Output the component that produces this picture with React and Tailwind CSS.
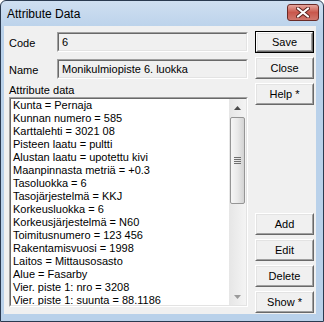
import React from "react";

const rows = [
  "Kunta = Pernaja",
  "Kunnan numero = 585",
  "Karttalehti = 3021 08",
  "Pisteen laatu = pultti",
  "Alustan laatu = upotettu kivi",
  "Maanpinnasta metriä = +0.3",
  "Tasoluokka = 6",
  "Tasojärjestelmä = KKJ",
  "Korkeusluokka = 6",
  "Korkeusjärjestelmä = N60",
  "Toimitusnumero = 123 456",
  "Rakentamisvuosi = 1998",
  "Laitos = Mittausosasto",
  "Alue = Fasarby",
  "Vier. piste 1: nro = 3208",
  "Vier. piste 1: suunta = 88.1186",
];

function Button({ label, isDefault, className = "" }) {
  const inner = (
    <div className="h-full border border-t-white border-l-white border-b-[#696969] border-r-[#696969]">
      <div className="h-full flex items-center justify-center border border-t-[#e3e3e3] border-l-[#e3e3e3] border-b-[#a0a0a0] border-r-[#a0a0a0] bg-[#f0f0f0]">
        {label}
      </div>
    </div>
  );
  return (
    <div className={"h-[22px] w-[59px] " + className}>
      {isDefault ? <div className="h-full border border-[#000]">{inner}</div> : inner}
    </div>
  );
}

function Sunken({ children, className = "" }) {
  return (
    <div className={"border border-t-[#a0a0a0] border-l-[#a0a0a0] border-b-white border-r-white " + className}>
      <div className="h-full border border-t-[#696969] border-l-[#696969] border-b-[#e3e3e3] border-r-[#e3e3e3]">
        {children}
      </div>
    </div>
  );
}

function Scrollbar() {
  return (
    <div className="w-[17px] h-full flex flex-col bg-gradient-to-r from-[#e6e6e6] to-[#f4f4f4]">
      <div className="h-[17px] flex items-center justify-center">
        <svg width="7" height="4" viewBox="0 0 7 4">
          <path d="M0 4 L3.5 0 L7 4 Z" fill="#4a4a4a" />
        </svg>
      </div>
      <div className="h-[87px] mx-[1px] mt-[1px] rounded-[2px] border border-[#959595] bg-gradient-to-r from-[#f6f6f6] via-[#e9e9e9] to-[#d3d3d3] flex items-center justify-center">
        <svg width="7" height="7" viewBox="0 0 7 7">
          <rect x="0" y="0" width="7" height="1" fill="#6f6f6f" />
          <rect x="0" y="2" width="7" height="1" fill="#6f6f6f" />
          <rect x="0" y="4" width="7" height="1" fill="#6f6f6f" />
          <rect x="0" y="6" width="7" height="1" fill="#6f6f6f" />
        </svg>
      </div>
      <div className="flex-1" />
      <div className="h-[17px] flex items-center justify-center">
        <svg width="7" height="4" viewBox="0 0 7 4">
          <path d="M0 0 L3.5 4 L7 0 Z" fill="#9a9a9a" />
        </svg>
      </div>
    </div>
  );
}

export default function App() {
  return (
    <div className="w-[324px] h-[322px] font-['Liberation_Sans',Arial,sans-serif] text-[11px] text-black">
      <div className="relative h-full flex flex-col border border-[#2a3a50] rounded-t-[6px] bg-gradient-to-b from-[#cfdff1] to-[#b9d1ea] to-[30px]">
        {/* title bar */}
        <div className="h-[25px] flex items-center pl-[6px] text-[12px] text-black">
          Attribute Data
        </div>
        <div className="absolute top-[3px] right-[4px] w-[32px] h-[17px] rounded-[3px] border border-[#6a2a26] bg-gradient-to-b from-[#e5a69e] via-[#c9574c] to-[#d0776d] flex items-center justify-center">
          <svg width="14" height="11" viewBox="0 0 14 11">
            <path d="M2 1.5 L12 9.5 M12 1.5 L2 9.5" stroke="#5a2420" strokeWidth="4" strokeLinecap="round" />
            <path d="M2 1.5 L12 9.5 M12 1.5 L2 9.5" stroke="#ffffff" strokeWidth="2.2" strokeLinecap="round" />
          </svg>
        </div>

        {/* client area */}
        <div className="flex-1 ml-[3px] mr-[7px] mb-[7px] bg-[#f0f0f0] flex pl-[5px] pr-[2px] pt-[5px]">
          <div className="w-[239px] flex flex-col mt-[1px]">
            <div className="h-[20px] flex">
              <div className="w-[48px] pt-[5px] leading-[13px]">Code</div>
              <Sunken className="w-[191px] h-[20px]">
                <div className="h-full flex items-center pl-[3px] leading-[13px]">6</div>
              </Sunken>
            </div>
            <div className="h-[20px] flex mt-[7px]">
              <div className="w-[48px] pt-[5px] leading-[13px]">Name</div>
              <Sunken className="w-[191px] h-[20px]">
                <div className="h-full flex items-center pl-[3px] leading-[13px]">Monikulmiopiste 6. luokka</div>
              </Sunken>
            </div>
            <div className="mt-[5px] h-[13px] leading-[13px]">Attribute data</div>
            <Sunken className="h-[210px] bg-white">
              <div className="h-full flex overflow-hidden">
                <div className="flex-1 pl-[2px] overflow-hidden">
                  {rows.map((r, i) => (
                    <div key={i} className="h-[13px] leading-[13px] whitespace-nowrap">
                      {r}
                    </div>
                  ))}
                </div>
                <Scrollbar />
              </div>
            </Sunken>
          </div>

          <div className="ml-[7px] flex flex-col">
            <Button label="Save" isDefault />
            <Button label="Close" className="mt-[4px]" />
            <Button label="Help *" className="mt-[4px]" />
            <Button label="Add" className="mt-[108px]" />
            <Button label="Edit" className="mt-[4px]" />
            <Button label="Delete" className="mt-[4px]" />
            <Button label="Show *" className="mt-[4px]" />
          </div>
        </div>
      </div>
    </div>
  );
}
